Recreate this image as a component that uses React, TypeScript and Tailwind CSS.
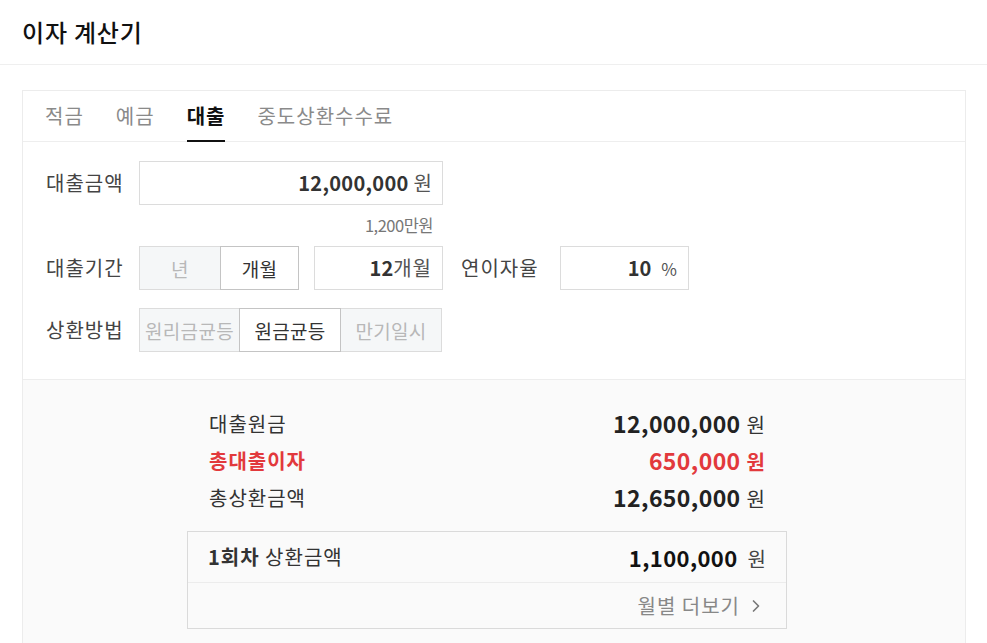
import { ChevronRight } from "lucide-react";

const font = { fontFamily: '"Noto Sans CJK KR", "Noto Sans", sans-serif' };

function Seg({
  items,
  active,
  widths,
}: {
  items: string[];
  active: number;
  widths: string[];
}) {
  return (
    <div className="flex h-[44px]">
      {items.map((t, i) => (
        <div
          key={t}
          className={
            "flex items-center justify-center border text-[19px] tracking-[0.3px] " +
            widths[i] +
            (i > 0 ? " -ml-px" : "") +
            (i === active
              ? " z-10 border-[#c4c4c4] bg-white text-[#333]"
              : " border-[#dcdcdc] bg-[#f5f7f8] text-[#b8b8b8]")
          }
        >
          {t}
        </div>
      ))}
    </div>
  );
}

function ResultRow({
  label,
  value,
  red,
}: {
  label: string;
  value: string;
  red?: boolean;
}) {
  return (
    <div
      className={
        "flex h-[37px] items-center justify-between px-[22px] " +
        (red ? "text-[#e2393c]" : "text-[#333]")
      }
    >
      <span className={"text-[20px] tracking-[1px] " + (red ? "font-bold" : "")}>{label}</span>
      <span className="flex items-baseline gap-[6px]">
        <span className={"text-[23px] font-bold tracking-[0.4px] " + (red ? "" : "text-[#222]")}>
          {value}
        </span>
        <span className={"text-[20px] " + (red ? "font-bold" : "")}>원</span>
      </span>
    </div>
  );
}

export default function App() {
  return (
    <div className="min-h-screen bg-white leading-none" style={font}>
      {/* header */}
      <div className="flex h-[65px] items-center border-b border-[#efefef] pl-[22px]">
        <h1 className="text-[24px] font-medium tracking-[0.8px] text-[#111]">이자 계산기</h1>
      </div>

      <div className="px-[21px] pl-[22px] pt-[25px]">
        <div className="border border-[#ececec] bg-white">
          {/* tabs */}
          <div className="flex h-[51px] gap-[32px] border-b border-[#eeeeee] pl-[22px] text-[20px] tracking-[1px] text-[#8a8a8a]">
            <div className="flex items-center">적금</div>
            <div className="flex items-center">예금</div>
            <div className="relative flex items-center font-bold text-[#111]">
              대출
              <span className="absolute bottom-[-1px] left-0 right-0 h-[2px] bg-[#111]" />
            </div>
            <div className="flex items-center">중도상환수수료</div>
          </div>

          {/* form */}
          <div className="pb-[27px] pl-[23px] pt-[19px] text-[20px] text-[#444]">
            <div className="flex items-center">
              <span className="w-[93px] tracking-[1px]">대출금액</span>
              <div className="flex h-[44px] w-[304px] items-center justify-end gap-[5px] border border-[#dcdcdc] bg-white pr-[10px]">
                <span className="text-[20px] font-bold tracking-[0.3px] text-[#333]">12,000,000</span>
                <span className="text-[#555]">원</span>
              </div>
            </div>
            <div className="flex h-[41px] w-[397px] items-center justify-end pr-[10px] text-[16.5px] tracking-[-0.5px] text-[#777]">
              1,200만원
            </div>

            <div className="flex items-center">
              <span className="w-[93px] tracking-[1px]">대출기간</span>
              <Seg items={["년", "개월"]} active={1} widths={["w-[82px]", "w-[79px]"]} />
              <div className="ml-[15px] flex h-[44px] w-[129px] items-center justify-end border border-[#dcdcdc] bg-white pr-[10px]">
                <span className="font-bold text-[#333]">12</span>
                <span className="tracking-[1px] text-[#555]">개월</span>
              </div>
              <span className="ml-[18px] w-[99px] tracking-[1px]">연이자율</span>
              <div className="flex h-[44px] w-[129px] items-center justify-end gap-[10px] border border-[#dcdcdc] bg-white pr-[11px]">
                <span className="font-bold text-[#333]">10</span>
                <span className="text-[17px] text-[#555]">%</span>
              </div>
            </div>

            <div className="mt-[18px] flex items-center">
              <span className="w-[93px] tracking-[1px]">상환방법</span>
              <Seg
                items={["원리금균등", "원금균등", "만기일시"]}
                active={1}
                widths={["w-[101px]", "w-[102px]", "w-[102px]"]}
              />
            </div>
          </div>

          {/* results */}
          <div className="border-t border-[#ededed] bg-[#fafafa] pb-[40px] pt-[25px]">
            <div className="ml-[164px] w-[600px]">
              <ResultRow label="대출원금" value="12,000,000" />
              <ResultRow label="총대출이자" value="650,000" red />
              <ResultRow label="총상환금액" value="12,650,000" />

              <div className="mt-[15px] border border-[#dadada] bg-[#fafafa]">
                <div className="flex h-[51px] items-center justify-between border-b border-[#ececec] px-[20px] text-[#333]">
                  <span className="text-[20px] tracking-[1px]">
                    <span className="font-bold">1회차</span> 상환금액
                  </span>
                  <span className="flex items-baseline gap-[10px]">
                    <span className="text-[22px] font-bold tracking-[0.4px] text-[#111]">1,100,000</span>
                    <span className="text-[20px] text-[#444]">원</span>
                  </span>
                </div>
                <div className="flex h-[45px] items-center justify-end gap-[6px] pr-[20px] text-[20px] tracking-[1px] text-[#888]">
                  <span>월별 더보기</span>
                  <ChevronRight className="h-[20px] w-[20px] text-[#777]" strokeWidth={2} />
                </div>
              </div>
            </div>
          </div>
        </div>
      </div>
    </div>
  );
}
